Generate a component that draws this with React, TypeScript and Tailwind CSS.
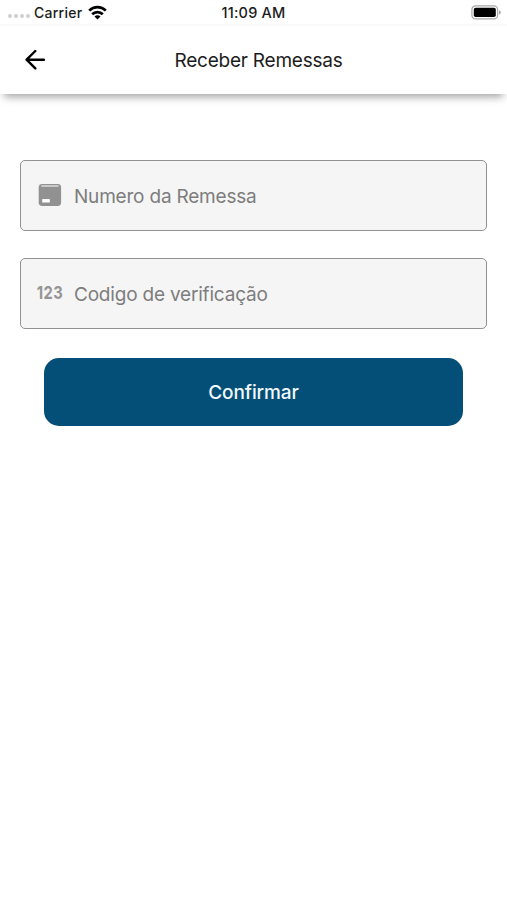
import { useState } from "react";
import type { ReactNode } from "react";

interface FieldProps {
  icon: ReactNode;
  placeholder: string;
  value: string;
  onChange: (value: string) => void;
}

function WifiIcon() {
  return (
    <svg className="h-[15px] w-[19px]" viewBox="0 0 19 15" aria-hidden="true">
      <g fill="none" stroke="#000" strokeWidth="2.7">
        <path d="M1.2 5.6a11.8 11.8 0 0 1 16.6 0" />
        <path d="M4.2 9.3a7.5 7.5 0 0 1 10.6 0" />
      </g>
      <path d="M9.5 14.5 6.5 11.5a4.2 4.2 0 0 1 6 0Z" />
    </svg>
  );
}

function BatteryIcon() {
  return (
    <svg className="h-[15px] w-[31px]" viewBox="0 0 31 15" aria-hidden="true">
      <rect x="0.9" y="0.9" width="25.7" height="13" rx="3.6" fill="#fff" stroke="#a9a9a9" strokeWidth="1.2" />
      <rect x="2.8" y="2.7" width="22" height="9.4" rx="1.8" />
      <path d="M28 5.2c2.3.8 2.3 3.6 0 4.4Z" fill="#a0a0a0" />
    </svg>
  );
}

function BackIcon() {
  return (
    <svg className="h-5 w-5" viewBox="0 0 20 20" fill="none" stroke="#000" strokeWidth="2.4" aria-hidden="true">
      <path d="M19 9.7H2M10.3 1 1.6 9.7l8.7 8.7" strokeLinejoin="round" strokeLinecap="round" />
    </svg>
  );
}

function PackageIcon() {
  return (
    <svg className="mb-[2px] h-6 w-6" viewBox="0 0 24 24" aria-hidden="true">
      <rect x="0.7" y="1" width="22.4" height="22" rx="3.4" fill="#919191" />
      <path d="M4 3h15.8" stroke="#c9c9c9" strokeWidth="1.8" strokeLinecap="round" />
      <rect x="4.2" y="15.9" width="7.6" height="3.6" rx="0.5" fill="#fff" />
    </svg>
  );
}

function StatusBar() {
  return (
    <div className="grid h-[26px] grid-cols-3 items-center border-b-2 border-[#fbfbfb] bg-white text-[14px] font-medium text-[#1c1c1c]">
      <div className="flex items-center pl-2">
        <div className="mt-2 flex gap-[2px]">
          {[0, 1, 2, 3].map((dot) => (
            <span key={dot} className="h-[4px] w-[4px] rounded-full bg-[#cfcfcf]" />
          ))}
        </div>
        <span className="ml-1 mr-[6px] tracking-[0.25px]">Carrier</span>
        <WifiIcon />
      </div>
      <span className="pt-[2px] text-center text-[14.5px] tracking-[0.2px]">11:09 AM</span>
      <div className="flex justify-end pr-[5px]">
        <BatteryIcon />
      </div>
    </div>
  );
}

function Field({ icon, placeholder, value, onChange }: FieldProps) {
  return (
    <label className="flex h-[71px] items-center rounded-[5px] border-[1.5px] border-[#929292] bg-[#f5f5f5] pl-4">
      <span className="flex w-[26px] shrink-0 justify-center">{icon}</span>
      <input
        className="ml-[11px] min-w-0 flex-1 bg-transparent pt-[4px] text-[19px] tracking-[-0.2px] text-[#7d7d7d] outline-none placeholder:text-[#7d7d7d]"
        placeholder={placeholder}
        value={value}
        onChange={(e) => onChange(e.target.value)}
      />
    </label>
  );
}

export default function App() {
  const [shipment, setShipment] = useState("");
  const [code, setCode] = useState("");

  return (
    <div className="flex min-h-[900px] flex-col overflow-hidden bg-white font-['Inter','Liberation_Sans',sans-serif]">
      <StatusBar />

      <header className="grid h-[68px] grid-cols-[60px_1fr_60px] items-center bg-white shadow-[0_7px_8px_-4px_rgba(0,0,0,0.36)]">
        <button type="button" className="pl-[25px]" aria-label="Voltar">
          <BackIcon />
        </button>
        <h1 className="pl-[10px] pt-[2px] text-center text-[19px] tracking-[-0.22px] text-[#1c1c1c]">
          Receber Remessas
        </h1>
      </header>

      <main className="flex flex-col px-5 pt-[66px]">
        <div className="flex flex-col gap-[27px]">
          <Field icon={<PackageIcon />} placeholder="Numero da Remessa" value={shipment} onChange={setShipment} />
          <Field
            icon={<span className="mb-[2px] scale-x-[0.82] text-[18px] font-bold tracking-[0.4px] text-[#959595]">123</span>}
            placeholder="Codigo de verificação"
            value={code}
            onChange={setCode}
          />
        </div>
        <button
          type="button"
          className="mx-6 mt-[29px] h-[68px] rounded-[15px] bg-[#034f77] pt-[2px] text-[19px] font-medium tracking-[-0.1px] text-[#f2f8fb]"
        >
          Confirmar
        </button>
      </main>
    </div>
  );
}
